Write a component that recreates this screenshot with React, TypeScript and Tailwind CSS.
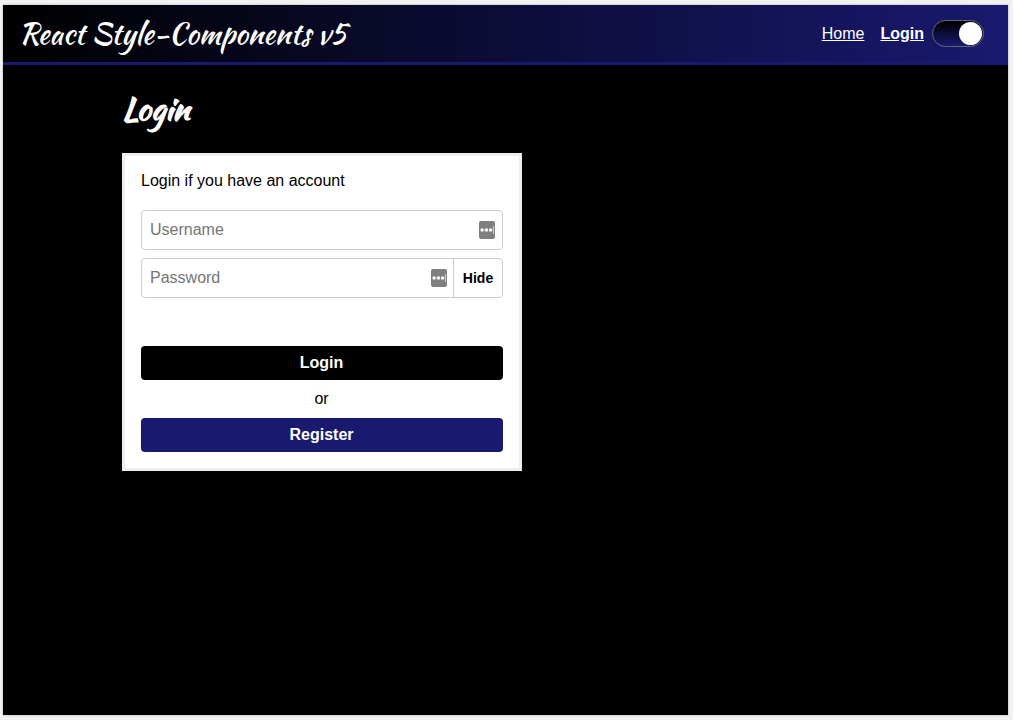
import React from "react";

function DotsBadge({ className = "" }: { className?: string }) {
  return (
    <svg width="16" height="18" viewBox="0 0 16 18" className={className}>
      <rect width="16" height="18" rx="2" fill="#7f7f7f" />
      <circle cx="3.1" cy="9" r="1.75" fill="#fff" />
      <circle cx="7.4" cy="9" r="1.75" fill="#fff" />
      <circle cx="11.6" cy="9" r="1.75" fill="#fff" />
      <rect x="14" y="5" width="1" height="8" fill="#d0d0d0" />
    </svg>
  );
}

function Header() {
  return (
    <header className="flex h-[60px] items-center justify-between border-b-[3px] border-[#191970] bg-[linear-gradient(to_right,#000,#191970)] pr-6 pl-4">
      <h1 className="pt-[2px] font-['Kaushan_Script',cursive] text-[28.8px] leading-none whitespace-nowrap">
        React Style-Components v5
      </h1>
      <nav className="flex items-center text-base">
        <a href="#" className="mr-4 underline">Home</a>
        <a href="#" className="mr-2 font-bold underline">Login</a>
        <button className="flex h-[27px] w-[52px] items-center justify-end rounded-full border border-[#666] bg-[linear-gradient(to_bottom,#000,#191970)] pr-[1.5px]">
          <span className="size-[22.5px] rounded-full bg-white" />
        </button>
      </nav>
    </header>
  );
}

export default function App() {
  return (
    <div className="h-[720px] w-[1013px] overflow-hidden bg-[#f2f2f2] pt-[5px] pl-[3px] font-['Liberation_Sans',Arial,sans-serif] text-base">
      <div className="h-[710px] w-[1005px] bg-black text-white shadow-[0_0_2px_#aaa]">
        <Header />
        <main className="pl-[119px]">
          <h2 className="flex h-[88px] items-center pb-[1px] font-['Kaushan_Script',cursive] text-[32px] leading-none font-bold">
            Login
          </h2>
          <form className="flex h-[318px] w-[400px] flex-col border-[3px] border-[#eee] bg-white p-4 text-black">
            <p className="h-[38px] leading-[18px]">Login if you have an account</p>
            <div className="flex h-10 items-center justify-between rounded border border-[#ccc] px-2 pr-[7px] text-[#757575]">
              <span>Username</span>
              <DotsBadge />
            </div>
            <div className="mt-2 flex h-10 items-center rounded border border-[#ccc] pl-2 text-[#757575]">
              <span className="grow">Password</span>
              <DotsBadge className="mr-[6px]" />
              <span className="flex h-full w-[49px] items-center justify-center border-l border-[#ccc] text-sm font-bold text-black">Hide</span>
            </div>
            <button type="button" className="mt-12 h-[34px] rounded bg-black pr-px font-bold text-white">Login</button>
            <p className="flex h-[38px] items-center justify-center pr-px">or</p>
            <button type="button" className="h-[34px] rounded bg-[#191970] pr-px font-bold text-white">Register</button>
          </form>
        </main>
      </div>
    </div>
  );
}
